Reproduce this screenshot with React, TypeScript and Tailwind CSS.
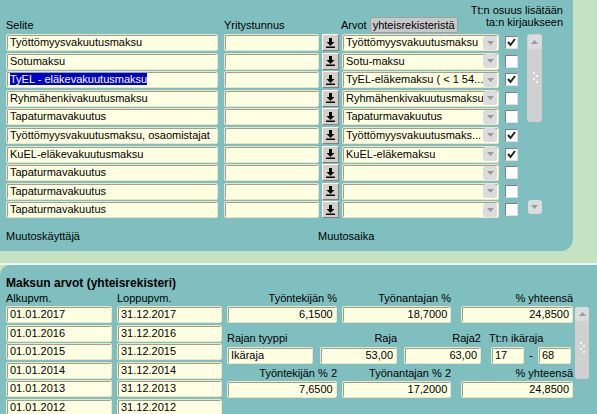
const F = { fontFamily: '"Liberation Sans", Arial, sans-serif' };
const inp = "h-[17px] bg-[#ffffe1] border border-[#e8e8c8] rounded-[2px] shadow-[inset_1px_1px_0_#a0a090] text-[11px] leading-[15px] px-[3px] text-black whitespace-nowrap overflow-hidden";

const rows: [string, string, boolean][] = [
  ["Työttömyysvakuutusmaksu", "Työttömyysvakuutusmaksu", true],
  ["Sotumaksu", "Sotu-maksu", false],
  ["TyEL - eläkevakuutusmaksu", "TyEL-eläkemaksu ( < 1 54...", true],
  ["Ryhmähenkivakuutusmaksu", "Ryhmähenkivakuutusmaksu", false],
  ["Tapaturmavakuutus", "Tapaturmavakuutus", false],
  ["Työttömyysvakuutusmaksu, osaomistajat", "Työttömyysvakuutusmaks...", true],
  ["KuEL-eläkevakuutusmaksu", "KuEL-eläkemaksu", true],
  ["Tapaturmavakuutus", "", false],
  ["Tapaturmavakuutus", "", false],
  ["Tapaturmavakuutus", "", false],
];

function Dl() {
  return (
    <div className="w-[17px] h-[17px] bg-[#d4d0c8] border border-t-white border-l-white border-r-[#808080] border-b-[#808080] flex items-center justify-center">
      <svg width="9" height="10" viewBox="0 0 9 10"><path d="M3 0h3v4h2.5L4.5 8 0.5 4H3z" fill="#000"/><rect x="0" y="8.5" width="9" height="1.5" fill="#000"/></svg>
    </div>
  );
}
function Chk({ on }: { on: boolean }) {
  return (
    <div className="w-[13px] h-[13px] bg-white border border-t-[#808080] border-l-[#808080] border-r-[#e0e0e0] border-b-[#e0e0e0] flex items-center justify-center">
      {on && <svg width="9" height="9" viewBox="0 0 9 9"><path d="M1 4l2.5 3L8 1" stroke="#222" strokeWidth="2" fill="none"/></svg>}
    </div>
  );
}
function Arrow({ up }: { up?: boolean }) {
  return (
    <div className="w-[14px] h-[14px] bg-[#dcdcdc] rounded-[3px] flex items-center justify-center">
      <svg width="7" height="4" viewBox="0 0 7 4"><path d={up ? "M0 4L3.5 0 7 4z" : "M0 0h7L3.5 4z"} fill="#9a9a9a"/></svg>
    </div>
  );
}
function Grip() {
  return (
    <svg width="8" height="14" viewBox="0 0 8 14">
      {[1, 4, 7, 10].map((y, i) => <circle key={i} cx={i % 2 ? 6 : 3} cy={y + 1} r="1" fill="#fff" />)}
    </svg>
  );
}

export default function App() {
  return (
    <div style={F} className="w-[597px] h-[414px] bg-[#c5e2c2] overflow-hidden text-[11px] text-black">
      <div className="w-[573px] h-[251px] bg-[#80bfbf] rounded-br-[12px] relative px-[6px] pt-[4px]">
        <div className="flex h-[30px]">
          <div className="w-[218px] pt-[13px]">Selite</div>
          <div className="w-[117px] pt-[13px]">Yritystunnus</div>
          <div className="flex items-end pb-[1px] gap-[3px]">
            <span>Arvot</span>
            <div className="h-[16px] px-[2px] bg-[#c8c8c8] border border-[#a0a0a0] rounded-[2px] leading-[14px]">yhteisrekisteristä</div>
          </div>
          <div className="ml-auto text-right leading-[12px] pr-[4px]">Tt:n osuus lisätään<br />ta:n kirjaukseen</div>
        </div>
        <div className="flex">
          <div className="flex flex-col gap-[1.6px]">
            {rows.map((r, i) => (
              <div key={i} className="flex items-center h-[17px]">
                <div className={`${inp} w-[212px] ${i === 2 ? "bg-[#80bfbf]" : ""}`}>
                  {i === 2 ? <span className="bg-[#0000cc] text-white">{r[0]}</span> : r[0]}
                </div>
                <div className={`${inp} w-[95px] ml-[6px] ${i === 2 ? "bg-[#80bfbf]" : ""}`}></div>
                <div className="ml-[3px]"><Dl /></div>
                <div className={`${inp} w-[157px] ml-[3px] flex items-center pr-[1px]`}>
                  <span className="flex-1 overflow-hidden">{r[1]}</span><Arrow />
                </div>
                <div className="ml-[6px]"><Chk on={r[2]} /></div>
              </div>
            ))}
          </div>
          <div className="ml-[9px] w-[15px] h-[180px] flex flex-col items-center">
            <div className="w-[15px] h-[88px] bg-[#d0d0d0] rounded-[3px] flex flex-col items-center pt-[1px] gap-[22px]">
              <Arrow up />
              <Grip />
            </div>
            <div className="mt-auto"><Arrow /></div>
          </div>
        </div>
        <div className="flex mt-[10px]">
          <div className="w-[312px]">Muutoskäyttäjä</div>
          <div>Muutosaika</div>
        </div>
      </div>
      <div className="mt-[12px] h-[2px] bg-white/70" />
      <div className="bg-[#80bfbf] h-[150px] px-[6px] pt-[11px] rounded-tl-[10px]">
        <div className="font-bold text-[12px] leading-[14px]">Maksun arvot (yhteisrekisteri)</div>
        <div className="flex mt-[2px]">
          <div className="flex flex-col">
            <div className="flex h-[13px] leading-[13px]"><div className="w-[111px]">Alkupvm.</div><div>Loppupvm.</div></div>
            <div className="flex flex-col gap-[1.5px] mt-[1px]">
              {[2017, 2016, 2015, 2014, 2013, 2012].map((y, i) => (
                <div key={y} className="flex gap-[5px]">
                  <div className={`${inp} w-[106px] ${i === 0 ? "bg-[#80bfbf]" : ""}`}>01.01.{y}</div>
                  <div className={`${inp} w-[105px] ${i === 0 ? "bg-[#80bfbf]" : ""}`}>31.12.{y}</div>
                </div>
              ))}
            </div>
          </div>
          <div className="ml-[5px] flex">
            <div className="flex flex-col w-[346px]">
              <div className="flex h-[13px] leading-[13px]">
                <div className="w-[110px] text-right">Työntekijän %</div>
                <div className="w-[114px] text-right">Työnantajan %</div>
                <div className="w-[122px] text-right">% yhteensä</div>
              </div>
              <div className="flex gap-[5px] mt-[1px]">
                <div className={`${inp} w-[110px] text-right`}>6,1500</div>
                <div className={`${inp} w-[110px] text-right`}>18,7000</div>
                <div className={`${inp} w-[112px] text-right ml-[5px]`}>24,8500</div>
              </div>
              <div className="flex h-[13px] leading-[13px] mt-[9px]">
                <div className="w-[80px]">Rajan tyyppi</div>
                <div className="w-[90px] text-right">Raja</div>
                <div className="w-[84px] text-right">Raja2</div>
                <div className="ml-[8px]">Tt:n ikäraja</div>
              </div>
              <div className="flex items-center mt-[2px]">
                <div className={`${inp} w-[86px]`}>Ikäraja</div>
                <div className={`${inp} w-[77px] ml-[7px] text-right`}>53,00</div>
                <div className={`${inp} w-[77px] ml-[7px] text-right`}>63,00</div>
                <div className={`${inp} w-[33px] ml-[10px]`}>17</div>
                <div className="w-[14px] text-center">-</div>
                <div className={`${inp} w-[33px]`}>68</div>
              </div>
              <div className="flex h-[13px] leading-[13px] mt-[3px]">
                <div className="w-[110px] text-right">Työntekijän % 2</div>
                <div className="w-[114px] text-right">Työnantajan % 2</div>
                <div className="w-[122px] text-right">% yhteensä</div>
              </div>
              <div className="flex gap-[5px] mt-[1px]">
                <div className={`${inp} w-[110px] text-right`}>7,6500</div>
                <div className={`${inp} w-[110px] text-right`}>17,2000</div>
                <div className={`${inp} w-[112px] text-right ml-[5px]`}>24,8500</div>
              </div>
            </div>
            <div className="ml-[2px] mt-[15px] w-[14px] h-[72px] bg-[#d0d0d0] rounded-[3px] flex flex-col items-center gap-[20px]">
              <Arrow up />
              <Grip />
            </div>
          </div>
        </div>
      </div>
    </div>
  );
}
